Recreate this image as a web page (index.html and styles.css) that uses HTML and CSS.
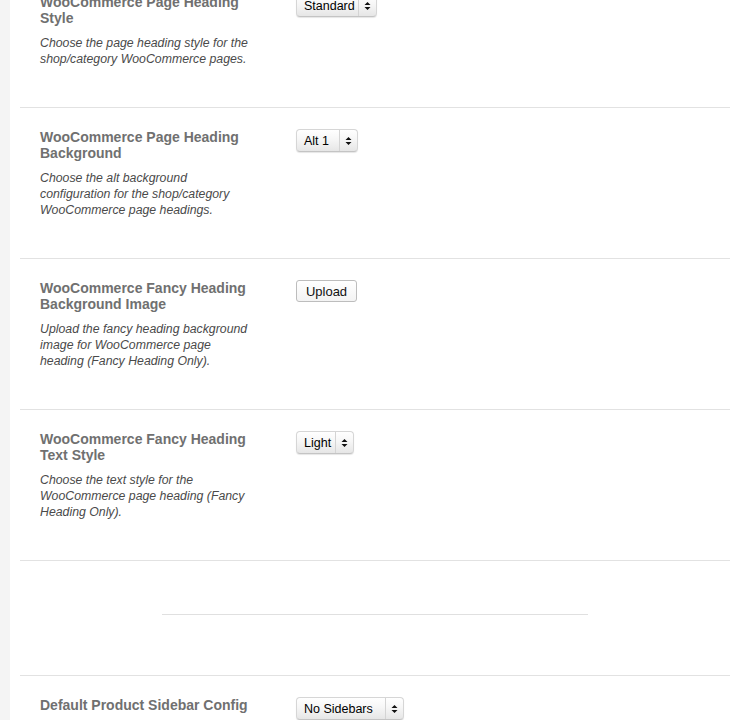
FILE: index.html
```html
<!DOCTYPE html>
<html>
<head>
<meta charset="utf-8">
<title>WooCommerce Options</title>
<link rel="stylesheet" href="styles.css">
</head>
<body>
<div class="panel">
  <div class="row">
    <div class="info">
      <h3 class="title">WooCommerce Page Heading Style</h3>
      <p class="desc">Choose the page heading style for the shop/category WooCommerce pages.</p>
    </div>
    <div class="control">
      <div class="select sel-standard"><span class="label">Standard</span><span class="arrow"><svg width="7" height="10" viewBox="0 0 7 10"><path d="M3.5 1 L6.5 4 L0.5 4 Z M3.5 9 L6.5 6 L0.5 6 Z" fill="#111"/></svg></span></div>
    </div>
  </div>
  <div class="row">
    <div class="info">
      <h3 class="title">WooCommerce Page Heading Background</h3>
      <p class="desc">Choose the alt background configuration for the shop/category WooCommerce page headings.</p>
    </div>
    <div class="control">
      <div class="select sel-alt"><span class="label">Alt 1</span><span class="arrow"><svg width="7" height="10" viewBox="0 0 7 10"><path d="M3.5 1 L6.5 4 L0.5 4 Z M3.5 9 L6.5 6 L0.5 6 Z" fill="#111"/></svg></span></div>
    </div>
  </div>
  <div class="row">
    <div class="info">
      <h3 class="title">WooCommerce Fancy Heading Background Image</h3>
      <p class="desc">Upload the fancy heading background image for WooCommerce page heading (Fancy Heading Only).</p>
    </div>
    <div class="control">
      <button class="btn" type="button">Upload</button>
    </div>
  </div>
  <div class="row">
    <div class="info">
      <h3 class="title">WooCommerce Fancy Heading Text Style</h3>
      <p class="desc">Choose the text style for the WooCommerce page heading (Fancy Heading Only).</p>
    </div>
    <div class="control">
      <div class="select sel-light"><span class="label">Light</span><span class="arrow"><svg width="7" height="10" viewBox="0 0 7 10"><path d="M3.5 1 L6.5 4 L0.5 4 Z M3.5 9 L6.5 6 L0.5 6 Z" fill="#111"/></svg></span></div>
    </div>
  </div>
  <div class="row row-sep">
    <hr class="sep">
  </div>
  <div class="row">
    <div class="info">
      <h3 class="title">Default Product Sidebar Config</h3>
    </div>
    <div class="control">
      <div class="select sel-sidebar"><span class="label">No Sidebars</span><span class="arrow"><svg width="7" height="10" viewBox="0 0 7 10"><path d="M3.5 1 L6.5 4 L0.5 4 Z M3.5 9 L6.5 6 L0.5 6 Z" fill="#111"/></svg></span></div>
    </div>
  </div>
</div>
</body>
</html>
```

FILE: styles.css
```css
html, body {
  margin: 0;
  padding: 0;
}
body {
  background: #f4f4f4;
  font-family: "Liberation Sans", Arial, sans-serif;
  overflow: hidden;
}
.panel {
  margin-left: 10px;
  margin-top: -27px;
  background: #ffffff;
  padding: 0 20px 0 10px;
  min-height: 800px;
}
.row {
  display: grid;
  grid-template-columns: 220px auto;
  column-gap: 36px;
  padding: 21px 20px 40px 20px;
  border-bottom: 1px solid #e2e2e2;
  align-items: start;
}
.info {
  min-width: 0;
}
.title {
  margin: 0;
  font-size: 14px;
  line-height: 16px;
  font-weight: bold;
  color: #707070;
}
.desc {
  margin: 9px 0 0 0;
  width: 211px;
  font-size: 12.3px;
  line-height: 16px;
  font-style: italic;
  color: #4a4a4a;
}
.control {
  display: flex;
  align-items: flex-start;
}
.select {
  display: flex;
  align-items: stretch;
  height: 23px;
  box-sizing: border-box;
  border: 1px solid #d6d6d6;
  border-bottom-color: #c4c4c4;
  border-radius: 4px;
  background: linear-gradient(#ffffff 0%, #f6f6f6 45%, #e6e6e6 100%);
  box-shadow: 0 1px 1px rgba(0,0,0,0.1);
  font-size: 12.5px;
  color: #000;
}
.select .label {
  flex: 1;
  display: flex;
  align-items: center;
  padding-left: 7px;
  white-space: nowrap;
}
.select .arrow {
  width: 17px;
  display: flex;
  align-items: center;
  justify-content: center;
  border-left: 1px solid #d4d4d4;
}
.sel-standard { width: 81px; }
.sel-alt { width: 62px; }
.sel-light { width: 58px; }
.sel-sidebar { width: 108px; }
.btn {
  margin: 0;
  height: 22px;
  width: 61px;
  padding: 0;
  box-sizing: border-box;
  border: 1px solid #bdbdbd;
  border-radius: 3px;
  background: linear-gradient(#ffffff, #f3f3f3);
  font-family: "Liberation Sans", Arial, sans-serif;
  font-size: 13px;
  color: #111;
}
.row-sep {
  display: block;
  padding: 53px 0 60px 0;
}
.sep {
  margin: 0 auto;
  width: 60%;
  height: 0;
  border: 0;
  border-top: 1px solid #e0e0e0;
}
```
